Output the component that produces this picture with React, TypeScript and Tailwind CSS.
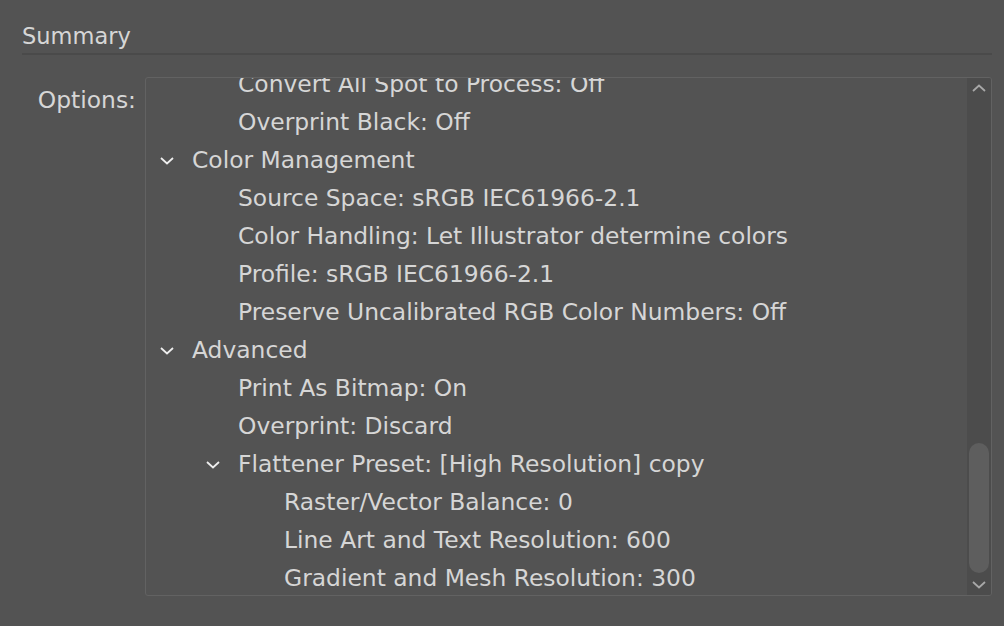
const rows: { level: number; text: string; open?: boolean }[] = [
  { level: 1, text: "Convert All Spot to Process: Off" },
  { level: 1, text: "Overprint Black: Off" },
  { level: 0, text: "Color Management", open: true },
  { level: 1, text: "Source Space: sRGB IEC61966-2.1" },
  { level: 1, text: "Color Handling: Let Illustrator determine colors" },
  { level: 1, text: "Profile: sRGB IEC61966-2.1" },
  { level: 1, text: "Preserve Uncalibrated RGB Color Numbers: Off" },
  { level: 0, text: "Advanced", open: true },
  { level: 1, text: "Print As Bitmap: On" },
  { level: 1, text: "Overprint: Discard" },
  { level: 1, text: "Flattener Preset: [High Resolution] copy", open: true },
  { level: 2, text: "Raster/Vector Balance: 0" },
  { level: 2, text: "Line Art and Text Resolution: 600" },
  { level: 2, text: "Gradient and Mesh Resolution: 300" },
];

const indent = ["pl-0", "pl-[46px]", "pl-[92px]"];

function Chevron({ up = false, className = "" }: { up?: boolean; className?: string }) {
  return (
    <svg width="14" height="8" viewBox="0 0 14 8" className={className}>
      <path d={up ? "M1 7 L7 1.5 L13 7" : "M1 1 L7 6.5 L13 1"} fill="none" stroke="currentColor" strokeWidth="1.8" />
    </svg>
  );
}

export default function App() {
  return (
    <div className="w-[1004px] h-[626px] bg-[#535353] overflow-hidden text-[#d6d6d6] font-['DejaVu_Sans',sans-serif]">
      <div className="pl-[22px] pr-[12px] pt-[21px]">
        <div className="text-[22.5px] leading-[30px] pb-[2px] border-b-2 border-[#4a4a4a]">Summary</div>
      </div>

      <div className="flex mt-[22px]">
        <div className="w-[145px] pr-[9px] text-right text-[23.4px] leading-[30px] pt-[8px]">Options:</div>
        <div className="w-[847px] h-[519px] border border-[#626262] rounded-[3px] flex overflow-hidden">
          <div className="flex-1 overflow-hidden">
            <div className="-mt-[12px]">
              {rows.map((r, i) => (
                <div key={i} className={`h-[38px] flex items-center ${indent[r.level]}`}>
                  <div className="w-[46px] pl-[14px] flex items-center text-[#eeeeee]">
                    {r.open && <Chevron />}
                  </div>
                  <span className="text-[23.4px] whitespace-nowrap">{r.text}</span>
                </div>
              ))}
            </div>
          </div>
          <div className="w-[24px] bg-[#4c4c4c] flex flex-col items-center text-[#a8a8a8]">
            <Chevron up className="mt-[6px]" />
            <div className="flex-1" />
            <div className="w-[20px] h-[130px] rounded-full bg-[#5e5e5e]" />
            <Chevron className="mt-[8px] mb-[6px]" />
          </div>
        </div>
      </div>
    </div>
  );
}
